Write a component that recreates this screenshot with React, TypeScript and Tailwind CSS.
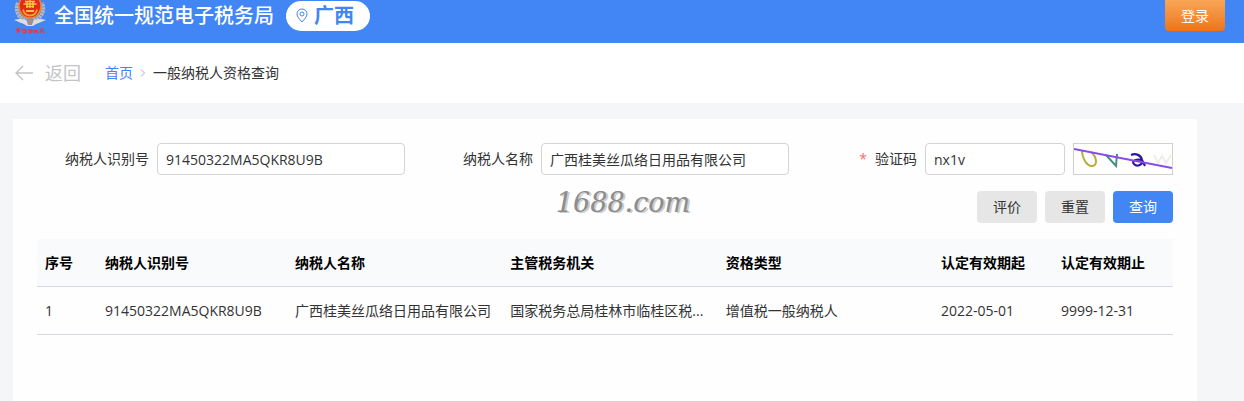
import React, { useState } from 'react';

interface TaxpayerRecord {
  id: string;
  name: string;
  authority: string;
  type: string;
  validFrom: string;
  validTo: string;
}

interface FieldProps {
  id: string;
  label: string;
  required?: boolean;
  value: string;
  onChange: (value: string) => void;
  children?: React.ReactNode;
}

const RECORDS: TaxpayerRecord[] = [
  {
    id: '91450322MA5QKR8U9B',
    name: '广西桂美丝瓜络日用品有限公司',
    authority: '国家税务总局桂林市临桂区税...',
    type: '增值税一般纳税人',
    validFrom: '2022-05-01',
    validTo: '9999-12-31',
  },
];

const HEADERS = ['序号', '纳税人识别号', '纳税人名称', '主管税务机关', '资格类型', '认定有效期起', '认定有效期止'];

const Emblem = () => (
  <svg className="h-9 w-8 shrink-0" viewBox="0 0 32 36" fill="none" aria-hidden="true">
    {/* Silver wings around the shield */}
    <path d="M4 3C1 10 4 18 12 20L16 22L20 20C28 18 31 10 28 3" stroke="#b9b7bd" strokeWidth="4" strokeDasharray="2.4 0.6" />
    <path d="M0 20C6 18 11 19 16 22C21 19 26 18 32 20C28 22 23 23 19 26H13C9 23 4 22 0 20Z" fill="#dcdde2" />
    <path d="M12 19H20L18 25H14Z" fill="#9a9298" />
    {/* Red disc with gate and gear */}
    <ellipse cx="16" cy="6" rx="11" ry="12" fill="#e3281c" stroke="#e8892c" strokeWidth="1.4" />
    <path d="M11 1.5H21M9.5 4H22.5M12 6.5H20M13 1V8M19 1V8M16 -1V8" stroke="#fbc840" strokeWidth="1.4" />
    <path d="M9 9.5C10 14 13 15.5 16 15.5S22 14 23 9.5" stroke="#f3a233" strokeWidth="1.8" />
    <path d="M12 11H20" stroke="#fbc840" strokeWidth="2" />
    {/* Calligraphy strip */}
    <path
      d="M2 30L6 29M4 28V33M3 32L6 31M8 31C9 29 11 29 12 31S10 33 9 33M14 30L18 31L15 33M17 29V33M20 31H24M22 30L20 33M23 32L24 33M26 30L30 29M28 29L26 33M29 31L30 33"
      stroke="#d8404c"
      strokeWidth="1.8"
    />
  </svg>
);

const PinIcon = () => (
  <svg className="h-4 w-3" viewBox="0 0 12 16" fill="none" stroke="#4285f4" aria-hidden="true">
    <path d="M6 14C3.5 11 1 8.8 1 6A5 5 0 0 1 11 6C11 8.8 8.5 11 6 14Z" />
    <circle cx="6" cy="6" r="2" />
  </svg>
);

const Captcha = () => (
  <svg className="h-full w-full" viewBox="0 0 98 30" fill="none">
    <path d="M8 7C8 13 12 22 18 22C24 22 23 13 17 8" stroke="#b5ac3c" strokeWidth="2" />
    <path d="M32 11L42 22L43 10" stroke="#3f917c" strokeWidth="2" />
    <path d="M57 11C62 9 67 11 68 16L71 22M68 16C62 15 57 17 60 20C63 23 68 21 68 18" stroke="#2b1a94" strokeWidth="2.2" />
    <path d="M80 11L84 19L88 12L92 19L97 11" stroke="#f0ede8" strokeWidth="2" />
    <path d="M0 5L98 24" stroke="#8a4ae8" strokeWidth="2" />
  </svg>
);

const Field: React.FC<FieldProps> = ({ id, label, required, value, onChange, children }) => (
  <div className="flex items-center gap-2">
    <label htmlFor={id} className="w-28 shrink-0 text-right text-[#333]">
      {required && <span className="mr-2 text-[#f56c6c]">*</span>}
      {label}
    </label>
    <input
      id={id}
      className="h-8 min-w-0 flex-1 rounded-sm border border-[#d4d4d4] bg-white px-2 text-[#333] outline-none focus:border-[#4285f4]"
      value={value}
      onChange={(e) => onChange(e.target.value)}
      spellCheck={false}
    />
    {children}
  </div>
);

const App: React.FC = () => {
  const [taxId, setTaxId] = useState('91450322MA5QKR8U9B');
  const [name, setName] = useState('广西桂美丝瓜络日用品有限公司');
  const [code, setCode] = useState('nx1v');

  const handleReset = () => {
    setTaxId('');
    setName('');
    setCode('');
  };

  return (
    <div className="flex min-h-screen flex-col bg-[#f5f6f8] font-['Open_Sans','Noto_Sans_CJK_SC',sans-serif] text-sm text-[#333]">
      <header className="flex h-[43px] items-start bg-[#4285f4] pr-[19px] pl-[14px]">
        <Emblem />
        <div className="flex h-8 items-center pl-2">
          <h1 className="text-xl font-medium text-white">全国统一规范电子税务局</h1>
          <button type="button" className="ml-3 flex h-[30px] items-center gap-1.5 rounded-full bg-white pr-4 pl-2.5 text-xl font-bold text-[#4285f4]">
            <PinIcon />
            广西
          </button>
        </div>
        <button type="button" className="ml-auto h-[31px] w-[60px] rounded-b-sm bg-linear-to-b from-[#f8a655] to-[#ee7414] text-white">
          登录
        </button>
      </header>

      <nav className="flex h-[60px] items-center bg-white px-[15px]">
        <button type="button" className="flex items-center gap-3 text-lg text-[#c3c3c8]">
          <svg className="h-4 w-[18px]" viewBox="0 0 18 16" fill="none" stroke="currentColor" strokeWidth="1.4" aria-hidden="true">
            <path d="M18 8H1M8 1L1 8L8 15" />
          </svg>
          返回
        </button>
        <a href="#" className="ml-6 text-[#4285f4]">首页</a>
        <svg className="mx-1.5 h-2 w-2" viewBox="0 0 8 8" fill="none" stroke="#a8abb2" aria-hidden="true">
          <path d="M2 0.5L5.5 4L2 7.5" />
        </svg>
        <span>一般纳税人资格查询</span>
      </nav>

      <main className="relative mt-4 mr-[47px] ml-[13px] flex-1 bg-[#fefefe] p-6">
        <form onSubmit={(e) => e.preventDefault()}>
          <div className="grid grid-cols-3 gap-4">
            <Field id="taxId" label="纳税人识别号" value={taxId} onChange={setTaxId} />
            <Field id="name" label="纳税人名称" value={name} onChange={setName} />
            <Field id="code" label="验证码" required value={code} onChange={setCode}>
              <button type="button" aria-label="验证码" className="h-8 w-[100px] shrink-0 border border-[#d3d0c8] bg-white">
                <Captcha />
              </button>
            </Field>
          </div>
          <div className="mt-4 flex justify-end gap-2">
            <button type="button" className="h-8 w-[60px] rounded-sm bg-[#e6e6e6]">评价</button>
            <button type="button" onClick={handleReset} className="h-8 w-[60px] rounded-sm bg-[#e6e6e6]">重置</button>
            <button type="submit" className="h-8 w-[60px] rounded-sm bg-[#4285f4] text-white">查询</button>
          </div>
        </form>

        {/* Watermark over the form */}
        <div className="pointer-events-none absolute inset-x-0 top-[68px] pl-9 text-center font-['DejaVu_Serif',serif] text-[27px] leading-8 text-[#8c8c8c] italic [text-shadow:2px_1px_0_#cccccc]">
          1688.com
        </div>

        <table className="mt-4 w-full table-fixed border-separate border-spacing-0 text-left">
          <colgroup>
            <col className="w-[60px]" />
            <col className="w-[190px]" />
            <col />
            <col />
            <col />
            <col className="w-[120px]" />
            <col className="w-[120px]" />
          </colgroup>
          <thead>
            <tr className="h-12 bg-[#f9fafc] text-black">
              {HEADERS.map((header) => (
                <th key={header} className="border-b border-[#d5d8e0] px-2">{header}</th>
              ))}
            </tr>
          </thead>
          <tbody>
            {RECORDS.map((record, i) => (
              <tr key={record.id} className="h-12 *:border-b *:border-[#d5d8e0] *:px-2">
                <td>{i + 1}</td>
                <td>{record.id}</td>
                <td>{record.name}</td>
                <td>{record.authority}</td>
                <td>{record.type}</td>
                <td>{record.validFrom}</td>
                <td>{record.validTo}</td>
              </tr>
            ))}
          </tbody>
        </table>
      </main>
    </div>
  );
};

export default App;
